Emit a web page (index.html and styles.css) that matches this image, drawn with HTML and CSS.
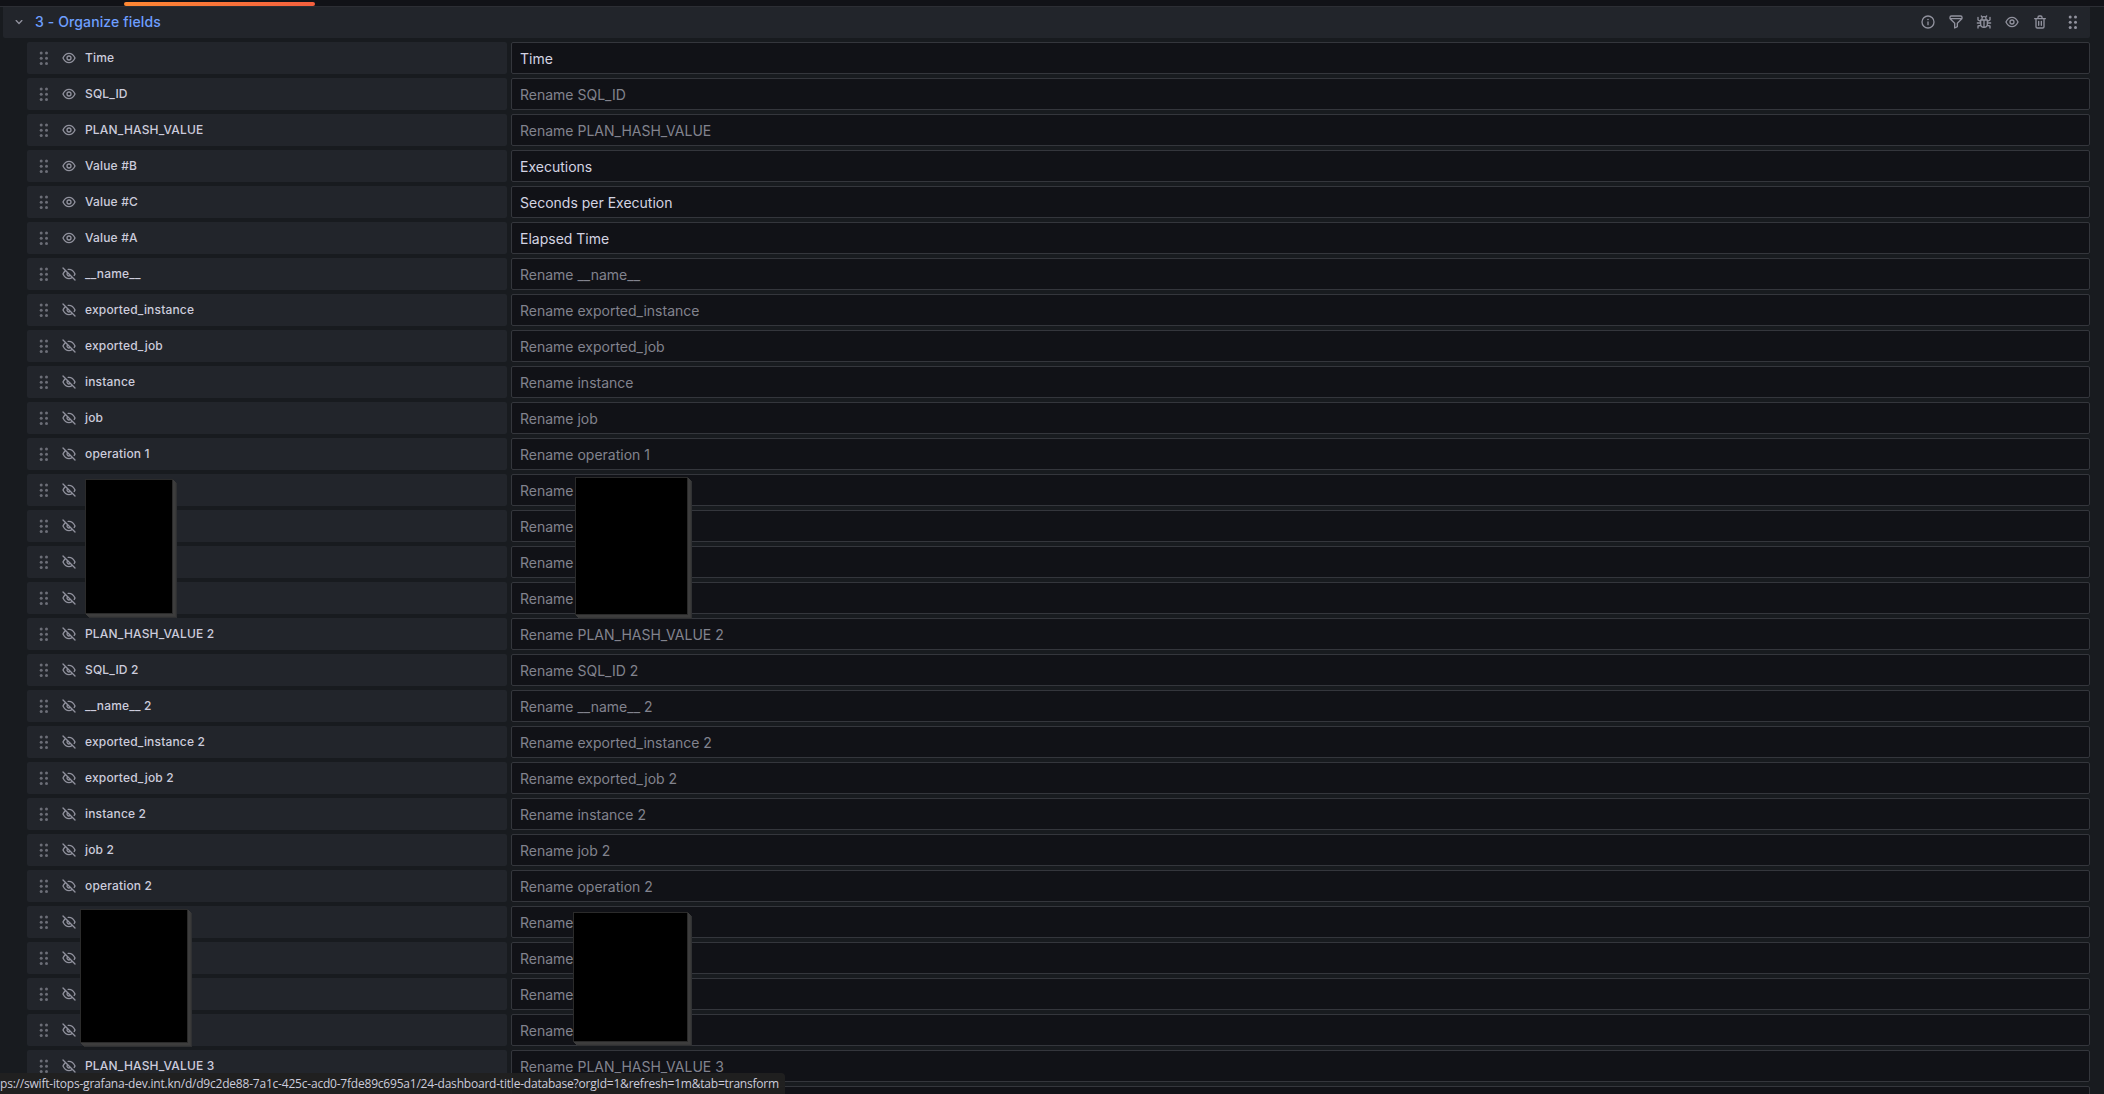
FILE: index.html
```html
<!DOCTYPE html>
<html lang="en">
  <head>
    <meta charset="UTF-8" />
    <meta name="viewport" content="width=device-width, initial-scale=1.0" />
    <title>Organize fields</title>
    <link rel="stylesheet" href="styles.css">
  </head>
  <body>
    <svg class="sprite">
      <symbol id="eye" viewBox="0 0 24 24">
        <path d="M21.92,11.6C19.9,6.91,16.1,4,12,4S4.1,6.91,2.08,11.6a1,1,0,0,0,0,.8C4.1,17.09,7.9,20,12,20s7.9-2.91,9.92-7.6A1,1,0,0,0,21.92,11.6ZM12,18c-3.17,0-6.17-2.29-7.9-6C5.83,8.29,8.83,6,12,6s6.17,2.29,7.9,6C18.17,15.71,15.17,18,12,18ZM12,8a4,4,0,1,0,4,4A4,4,0,0,0,12,8Zm0,6a2,2,0,1,1,2-2A2,2,0,0,1,12,14Z" />
      </symbol>
      <symbol id="eye-slash" viewBox="0 0 24 24">
        <path d="M10.94,6.08A6.93,6.93,0,0,1,12,6c3.18,0,6.17,2.29,7.91,6a15.23,15.23,0,0,1-.9,1.64,1,1,0,0,0-.16.55,1,1,0,0,0,1.86.5,15.77,15.77,0,0,0,1.21-2.3,1,1,0,0,0,0-.79C19.9,6.91,16.1,4,12,4a7.77,7.77,0,0,0-1.4.12,1,1,0,1,0,.34,2ZM3.71,2.29A1,1,0,0,0,2.29,3.71L5.39,6.8a14.62,14.62,0,0,0-3.31,4.8,1,1,0,0,0,0,.8C4.1,17.09,7.9,20,12,20a9.26,9.26,0,0,0,5.05-1.54l3.24,3.25a1,1,0,0,0,1.42,0,1,1,0,0,0,0-1.42Zm6.36,9.19,2.45,2.45A1.81,1.81,0,0,1,12,14a2,2,0,0,1-2-2A1.81,1.81,0,0,1,10.07,11.48ZM12,18c-3.18,0-6.17-2.29-7.9-6A12.09,12.09,0,0,1,6.8,8.21L8.57,10A4,4,0,0,0,14,15.43L15.59,17A7.24,7.24,0,0,1,12,18Z" />
      </symbol>
      <symbol id="dots" viewBox="0 0 10 16">
        <circle cx="2.2" cy="3" r="1.5" /><circle cx="7.5" cy="3" r="1.5" />
        <circle cx="2.2" cy="8.2" r="1.5" /><circle cx="7.5" cy="8.2" r="1.5" />
        <circle cx="2.2" cy="13.4" r="1.5" /><circle cx="7.5" cy="13.4" r="1.5" />
      </symbol>
    </svg>

    <div class="tabs"><div class="active-tab"></div></div>

    <div class="header">
      <svg class="icon chevron" viewBox="0 0 24 24"><path d="M17,9.17a1,1,0,0,0-1.41,0L12,12.71,8.46,9.17a1,1,0,0,0-1.41,0,1,1,0,0,0,0,1.42l4.24,4.24a1,1,0,0,0,1.42,0L17,10.59A1,1,0,0,0,17,9.17Z" /></svg>
      <div class="title">3 - Organize fields</div>
      <div class="actions">
        <svg class="icon" viewBox="0 0 24 24"><path d="M12,2A10,10,0,1,0,22,12,10,10,0,0,0,12,2Zm0,18a8,8,0,1,1,8-8A8,8,0,0,1,12,20Zm0-9a1,1,0,0,0-1,1v4a1,1,0,0,0,2,0V12A1,1,0,0,0,12,11Zm0-4a1.25,1.25,0,1,0,1.25,1.25A1.25,1.25,0,0,0,12,7Z" /></svg>
        <svg class="icon" viewBox="0 0 24 24"><path d="M19,2H5A3,3,0,0,0,2,5V6.17a3,3,0,0,0,.25,1.2l0,.06a2.81,2.81,0,0,0,.59.86L9,14.41V21a1,1,0,0,0,.47.85A1,1,0,0,0,10,22a1,1,0,0,0,.45-.11l4-2A1,1,0,0,0,15,19V14.41l6.12-6.12a2.81,2.81,0,0,0,.59-.86l0-.06A3,3,0,0,0,22,6.17V5A3,3,0,0,0,19,2ZM13.29,13.29A1,1,0,0,0,13,14v4.38l-2,1V14a1,1,0,0,0-.29-.71L5.41,8H18.59ZM20,6H4V5A1,1,0,0,1,5,4H19a1,1,0,0,1,1,1Z" /></svg>
        <svg class="icon line" viewBox="0 0 24 24"><path d="M7 9h10v6a5 5 0 0 1-10 0ZM9 9V7a3 3 0 0 1 6 0v2M12 9v11M9 4 8 3M15 4l1-1M7 11 3 9V5M17 11l4-2V5M7 13.500H2M17 13.500h5M7 17l-4 1v3M17 17l4 1v3" /></svg>
        <svg class="icon"><use href="#eye" /></svg>
        <svg class="icon" viewBox="0 0 24 24"><path d="M10,18a1,1,0,0,0,1-1V11a1,1,0,0,0-2,0v6A1,1,0,0,0,10,18ZM20,6H16V5a3,3,0,0,0-3-3H11A3,3,0,0,0,8,5V6H4A1,1,0,0,0,4,8H5V19a3,3,0,0,0,3,3h8a3,3,0,0,0,3-3V8h1a1,1,0,0,0,0-2ZM10,5a1,1,0,0,1,1-1h2a1,1,0,0,1,1,1V6H10Zm7,14a1,1,0,0,1-1,1H8a1,1,0,0,1-1-1V8H17Zm-3-1a1,1,0,0,0,1-1V11a1,1,0,0,0-2,0v6A1,1,0,0,0,14,18Z" /></svg>
        <svg class="dots"><use href="#dots" /></svg>
      </div>
    </div>

    <div class="fields" id="fields"></div>

    <div class="mask mask-1"></div>
    <div class="mask mask-2"></div>
    <div class="mask mask-3"></div>
    <div class="mask mask-4"></div>

    <div class="status">ps://swift-itops-grafana-dev.int.kn/d/d9c2de88-7a1c-425c-acd0-7fde89c695a1/24-dashboard-title-database?orgId=1&amp;refresh=1m&amp;tab=transform</div>

    <script src="script.js"></script>
  </body>
</html>
```
FILE: styles.css
```css
* {
  box-sizing: border-box;
}

body {
  position: relative;
  margin: 0;
  height: 100vh;
  overflow: hidden;
  background: #181b1f;
  color: #ccccdc;
  font-family: Inter, "Liberation Sans", sans-serif;
  font-size: 14px;
}

.sprite {
  display: none;
}

.tabs {
  height: 7px;
  padding: 2px 0 0 124px;
  background: #111217;
  border-bottom: 1px solid #2c2e34;
}

.active-tab {
  width: 191px;
  height: 4px;
  border-radius: 2px;
  background: linear-gradient(90deg, #ff8833, #f55f3e);
}

.header {
  display: flex;
  align-items: center;
  height: 31px;
  margin: 0 14px 4px 3px;
  padding: 0 8px 1px;
  background: #22252b;
  border-radius: 0 0 2px 2px;
}

.icon {
  flex: none;
  width: 16px;
  height: 16px;
  fill: #91929e;
}

.line {
  fill: none;
  stroke: #91929e;
  stroke-width: 2;
  stroke-linejoin: round;
  stroke-linecap: round;
}

.title {
  margin-left: 8px;
  padding-bottom: 1px;
  color: #6e9fff;
  font-weight: 500;
  letter-spacing: 0.12px;
}

.actions {
  display: flex;
  align-items: center;
  gap: 12px;
  margin-left: auto;
  padding-right: 4px;
}

.dots {
  flex: none;
  width: 10px;
  height: 16px;
  fill: #91929e;
}

.actions .dots {
  margin-left: 8px;
}

.fields {
  display: flex;
  flex-direction: column;
  gap: 4px;
  margin: 0 14px 0 27px;
}

.row {
  display: flex;
  gap: 4px;
  height: 32px;
}

.label {
  display: flex;
  align-items: center;
  width: 480px;
  padding-left: 12px;
  background: #22252b;
  border-radius: 2px;
  font-size: 12px;
  font-weight: 500;
  letter-spacing: 0.17px;
}

.label .dots {
  fill: #6c6e77;
}

.label .icon {
  margin: 0 8px 0 12px;
}

.label span {
  padding-bottom: 1px;
}

.row input {
  flex: 1;
  padding: 1px 8px 0;
  background: #111217;
  border: 1px solid #34363c;
  border-radius: 2px;
  color: #d4d4e2;
  font: inherit;
  letter-spacing: 0;
}

.row input::placeholder {
  color: #82838e;
}

/* hidden values */
.mask {
  position: absolute;
  background: #000;
  border: 1px solid #2b2b2b;
  box-shadow: 1px 1px #3d3d3d, 2px 2px #3d3d3d, 3px 3px #393939, 4px 4px #303133;
}

.mask-1 {
  left: 85px;
  top: 479px;
  width: 88px;
  height: 135px;
}

.mask-2 {
  left: 575px;
  top: 477px;
  width: 113px;
  height: 138px;
}

.mask-3 {
  left: 80px;
  top: 909px;
  width: 108px;
  height: 134px;
}

.mask-4 {
  left: 573px;
  top: 912px;
  width: 115px;
  height: 130px;
}

.status {
  position: absolute;
  left: 0;
  bottom: 0;
  width: 785px;
  height: 21px;
  background: rgba(32, 32, 32, 0.96);
  border-top-right-radius: 4px;
  font-family: "Open Sans", "Noto Sans", sans-serif;
  font-size: 12px;
  letter-spacing: -0.21px;
  line-height: 21px;
  white-space: nowrap;
}
```
FILE: script.js
```js
const fields = [
  { name: "Time", visible: true, rename: "Time" },
  { name: "SQL_ID", visible: true },
  { name: "PLAN_HASH_VALUE", visible: true },
  { name: "Value #B", visible: true, rename: "Executions" },
  { name: "Value #C", visible: true, rename: "Seconds per Execution" },
  { name: "Value #A", visible: true, rename: "Elapsed Time" },
  { name: "__name__" },
  { name: "exported_instance" },
  { name: "exported_job" },
  { name: "instance" },
  { name: "job" },
  { name: "operation 1" },
  { name: "" },
  { name: "" },
  { name: "" },
  { name: "" },
  { name: "PLAN_HASH_VALUE 2" },
  { name: "SQL_ID 2" },
  { name: "__name__ 2" },
  { name: "exported_instance 2" },
  { name: "exported_job 2" },
  { name: "instance 2" },
  { name: "job 2" },
  { name: "operation 2" },
  { name: "" },
  { name: "" },
  { name: "" },
  { name: "" },
  { name: "PLAN_HASH_VALUE 3" },
  { name: "" },
];

document.getElementById("fields").innerHTML = fields
  .map(
    (field) => `
      <div class="row">
        <div class="label">
          <svg class="dots"><use href="#dots" /></svg>
          <svg class="icon"><use href="#${field.visible ? "eye" : "eye-slash"}" /></svg>
          <span>${field.name}</span>
        </div>
        <input value="${field.rename || ""}" placeholder="Rename ${field.name}" />
      </div>`
  )
  .join("");
```
